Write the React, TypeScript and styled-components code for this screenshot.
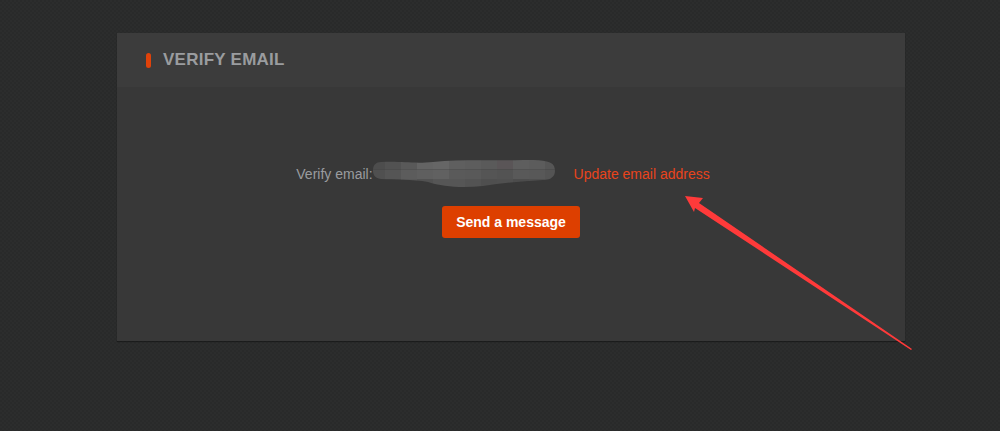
import styled, { createGlobalStyle } from 'styled-components';

const GlobalStyle = createGlobalStyle`
  html, body {
    margin: 0;
    padding: 0;
    background-color: #292a2a;
    background-image:
      linear-gradient(45deg, rgba(255,255,255,0.015) 25%, transparent 25%, transparent 75%, rgba(255,255,255,0.015) 75%),
      linear-gradient(45deg, rgba(255,255,255,0.015) 25%, transparent 25%, transparent 75%, rgba(255,255,255,0.015) 75%);
    background-size: 4px 4px;
    background-position: 0 0, 2px 2px;
    font-family: Arial, 'Liberation Sans', sans-serif;
  }
`;

const mosaic = [
  ['#4d4d4d', '#525252', '#595959', '#646464', '#666666', '#5f5f5f', '#5d5d5d', '#5a5a5a', '#5a5557', '#5e5e5e', '#5c5c5c', '#565656'],
  ['#505050', '#555555', '#5c5c5c', '#5f5f5f', '#616161', '#5a5a5a', '#595959', '#555555', '#535353', '#595959', '#585858', '#545454'],
  ['#4b4b4b', '#4e4e4e', '#575757', '#515151', '#565656', '#565656', '#535353', '#4f4f4f', '#505050', '#4c4c4c', '#4e4e4e', '#4b4b4b']
];

function EmailBlur() {
  return (
    <svg width="183" height="28" viewBox="0 0 183 28">
      <defs>
        <clipPath id="blob">
          <path d="M8 2 C30 1 40 4 60 2 C90 -1 120 1 150 0 C165 0 178 0 181 6 C184 14 180 20 170 20 C150 21 130 23 110 26 C90 28 70 27 55 22 C40 19 20 20 8 19 C1 18 0 14 0 10 C0 5 3 2 8 2 Z" />
        </clipPath>
      </defs>
      <g clipPath="url(#blob)">
        {mosaic.map((row, r) =>
          row.map((c, i) => (
            <rect key={`${r}-${i}`} x={i * 16 - 4} y={r * 9.5} width="16" height="9.5" fill={c} />
          ))
        )}
      </g>
    </svg>
  );
}

function App() {
  return (
    <>
      <GlobalStyle />
      <Styled.Page>
        <Styled.Panel>
          <Styled.Header>
            <Styled.Marker />
            <Styled.Title>VERIFY EMAIL</Styled.Title>
          </Styled.Header>
          <Styled.Body>
            <Styled.Row>
              <Styled.Label>Verify email:</Styled.Label>
              <EmailBlur />
              <Styled.Link href="#">Update email address</Styled.Link>
            </Styled.Row>
            <Styled.Button>Send a message</Styled.Button>
          </Styled.Body>
        </Styled.Panel>
        <Styled.Arrow width="1000" height="431" viewBox="0 0 1000 431">
          <polygon points="685,196 703,198 699,203 912,349 911,350 695,208 694,212" fill="#ff3a3a" />
        </Styled.Arrow>
      </Styled.Page>
    </>
  );
}

export default App;

const Styled = {
  Page: styled.div`
    position: relative;
    width: 1000px;
    height: 431px;
    padding: 33px 0 0 117px;
    box-sizing: border-box;
  `,
  Panel: styled.div`
    width: 788px;
    background: #383838;
    box-shadow: 0 1px 1px rgba(0, 0, 0, 0.35);
  `,
  Header: styled.div`
    display: flex;
    align-items: center;
    height: 54px;
    padding-left: 29px;
    background: #3c3c3c;
  `,
  Marker: styled.span`
    width: 5px;
    height: 15px;
    border-radius: 3px;
    background: #e0420a;
    margin-right: 12px;
  `,
  Title: styled.h2`
    margin: 0;
    font-size: 17px;
    font-weight: bold;
    color: #9a9c9f;
    letter-spacing: 0.25px;
  `,
  Body: styled.div`
    display: flex;
    flex-direction: column;
    align-items: center;
    height: 254px;
    padding-top: 73px;
    box-sizing: border-box;
  `,
  Row: styled.div`
    display: flex;
    align-items: center;
    padding-right: 16px;
    height: 28px;
  `,
  Label: styled.span`
    font-size: 14px;
    color: #9a9c9f;
  `,
  Link: styled.a`
    font-size: 14px;
    color: #e8441c;
    text-decoration: none;
    margin-left: 18px;
  `,
  Button: styled.button`
    margin-top: 18px;
    height: 32px;
    padding: 0 14px;
    border: none;
    border-radius: 3px;
    background: #dd3f00;
    color: #ffffff;
    font-family: Arial, 'Liberation Sans', sans-serif;
    font-size: 14px;
    font-weight: bold;
    cursor: pointer;
  `,
  Arrow: styled.svg`
    position: absolute;
    left: 0;
    top: 0;
    pointer-events: none;
  `
};
